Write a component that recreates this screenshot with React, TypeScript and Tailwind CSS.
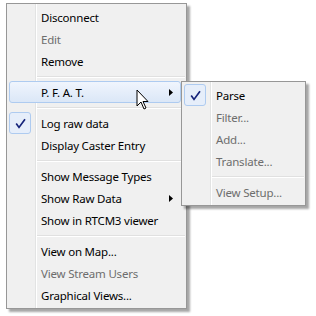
import type { ReactNode } from "react";

type Item = {
  label?: string;
  disabled?: boolean;
  checked?: boolean;
  sub?: boolean;
  active?: boolean;
  sep?: boolean;
};

const main_items: Item[] = [
  { label: "Disconnect" },
  { label: "Edit", disabled: true },
  { label: "Remove" },
  { sep: true },
  { label: "P. F. A. T.", sub: true, active: true },
  { sep: true },
  { label: "Log raw data", checked: true },
  { label: "Display Caster Entry" },
  { sep: true },
  { label: "Show Message Types" },
  { label: "Show Raw Data", sub: true },
  { label: "Show in RTCM3 viewer" },
  { sep: true },
  { label: "View on Map..." },
  { label: "View Stream Users", disabled: true },
  { label: "Graphical Views..." },
];

const pfat_items: Item[] = [
  { label: "Parse", checked: true },
  { label: "Filter...", disabled: true },
  { label: "Add...", disabled: true },
  { label: "Translate...", disabled: true },
  { sep: true },
  { label: "View Setup...", disabled: true },
];

function MenuRow({ item }: { item: Item }) {
  if (item.sep) {
    return (
      <div className="flex h-[9px] flex-col pl-[30px] pr-[1px] pt-[4px]">
        <div className="h-px bg-[#e0e0e0]" />
        <div className="h-px bg-white" />
      </div>
    );
  }
  return (
    <div
      className={`ml-[2px] mr-[5px] flex h-[22px] items-center rounded-[3px] border ${
        item.active
          ? "border-[#aecbf0] bg-gradient-to-b from-[#f0f5fd] to-[#dbe7f7]"
          : "border-transparent"
      }`}
    >
      <div
        className={`-my-px -ml-px flex h-[22px] w-[22px] shrink-0 items-center justify-center rounded-[3px] border ${
          item.checked ? "border-[#aecbf0] bg-[#e6eefa]" : "border-transparent"
        }`}
      >
        {item.checked && (
          <svg width="11" height="11" viewBox="0 0 11 11">
            <path d="M1.2 5.6 L4 9.4 L10 1.2" fill="none" stroke="#15237a" strokeWidth="1.7" />
          </svg>
        )}
      </div>
      <span className={`ml-[10px] mt-px ${item.disabled ? "text-[#6d6d6d]" : "text-black"}`}>
        {item.label}
      </span>
      {item.sub && (
        <svg className="ml-auto mr-[7px]" width="4" height="7" viewBox="0 0 4 7">
          <path d="M0 0 L4 3.5 L0 7 Z" fill="#000" />
        </svg>
      )}
    </div>
  );
}

function Menu({ items, className }: { items: Item[]; className: string }): ReactNode {
  return (
    <div
      className={`border border-[#979797] bg-[linear-gradient(to_right,#f0f0f0_28px,#e2e3e3_28px,#e2e3e3_29px,#ffffff_29px,#ffffff_30px,#f0f0f0_30px)] py-[2px] shadow-[3px_3px_2px_rgba(0,0,0,0.35)] ${className}`}
    >
      {items.map((it, i) => (
        <MenuRow key={i} item={it} />
      ))}
    </div>
  );
}

export default function App() {
  return (
    <div
      className="relative h-[316px] w-[316px] bg-white text-[11.5px] leading-none tracking-[-0.2px]"
      style={{ fontFamily: '"Noto Sans", "Open Sans", sans-serif' }}
    >
      <div className="pl-[6px] pt-[3px]">
        <Menu items={main_items} className="w-[181px]" />
      </div>

      {/* P. F. A. T. submenu popup */}
      <div className="absolute left-[181px] top-[81px]">
        <Menu items={pfat_items} className="w-[125px]" />
      </div>

      {/* mouse pointer */}
      <svg className="absolute left-[136px] top-[89px]" width="13" height="21" viewBox="0 0 13 21">
        <path
          d="M1 1 L1 17 L5 13 L8 20 L10 19 L7 12.5 L12 12.5 Z"
          fill="#fff"
          stroke="#000"
          strokeWidth="1"
        />
      </svg>
    </div>
  );
}
